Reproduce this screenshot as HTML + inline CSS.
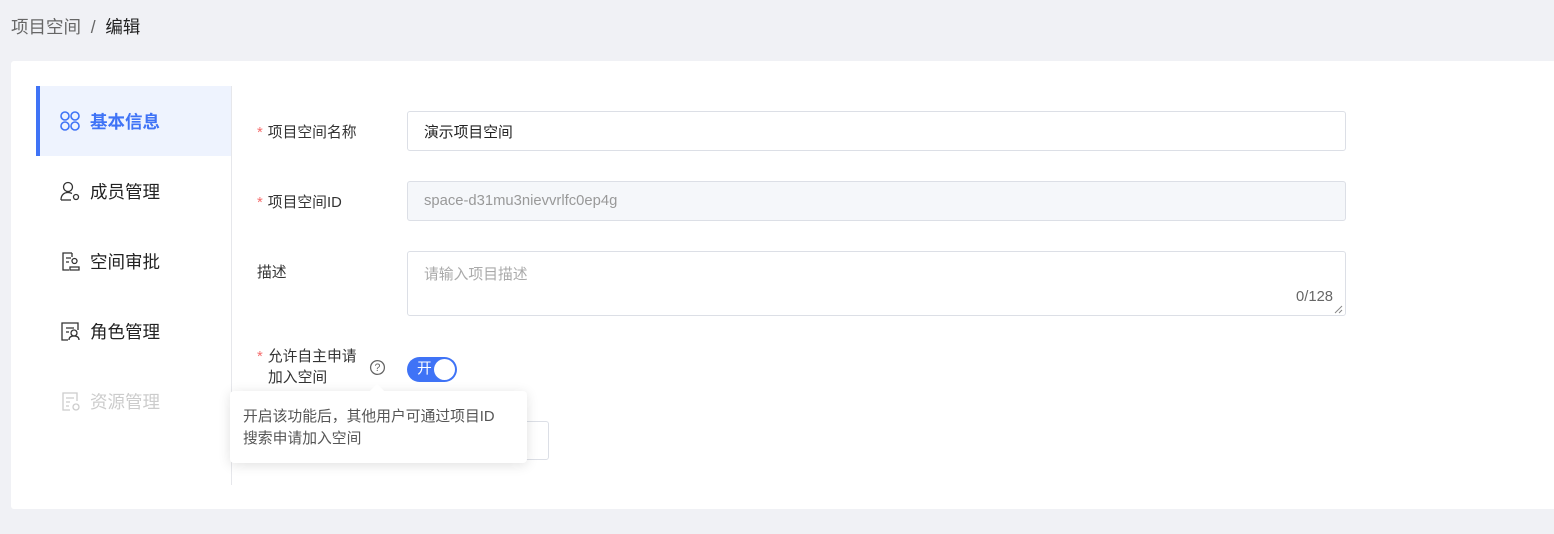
<!DOCTYPE html>
<html><head><meta charset="utf-8"><style>
*{margin:0;padding:0;box-sizing:border-box}
body{width:1554px;height:534px;background:#f0f1f5;font-family:"Liberation Sans","Noto Sans CJK SC",sans-serif;position:relative;overflow:hidden;color:#333}
.a{position:absolute}
.crumb{left:11px;top:14px;font-size:17.5px;color:#666}
.crumb b{font-weight:normal;color:#222}
.card{left:11px;top:61px;width:1560px;height:448px;background:#fff;border-radius:3px}
.nav{left:36px;width:195px;height:70px;font-size:17.5px;display:flex;align-items:center;padding-left:23px;color:#222}
.nav svg{margin-right:9px;flex-shrink:0;width:22px;height:22px}
.div{left:231px;top:86px;width:1px;height:399px;background:#e6e7eb}
.lab{font-size:14.8px;color:#333}
.lab i{color:#f56c6c;font-style:normal;margin-right:5px}
.inp{left:407px;width:939px;border:1px solid #dcdfe6;border-radius:3px;font-size:14.8px;padding-left:16px;display:flex;align-items:center}
</style></head><body>
<div class="a crumb">项目空间 &nbsp;/&nbsp; <b>编辑</b></div>
<div class="a card"></div>
<div class="a nav" style="top:86px;background:#eef3fe;border-left:4px solid #3f73f6;padding-left:19px;color:#3f73f6;font-weight:bold">
<svg viewBox="0 0 22 22" fill="none" stroke="#3f73f6" stroke-width="1.6"><circle cx="6" cy="6" r="4"/><circle cx="16" cy="6" r="4"/><circle cx="6" cy="16" r="4"/><circle cx="16" cy="16" r="4"/></svg>基本信息</div>
<div class="a nav" style="top:156px"><svg viewBox="0 0 22 22" fill="none" stroke="#333" stroke-width="1.3"><circle cx="9" cy="7" r="4.5"/><path d="M2 20c0-5 3-7.5 7-7.5 2 0 3 .5 4 1"/><path d="M2 20h10"/><circle cx="17" cy="17" r="2.5"/></svg>成员管理</div>
<div class="a nav" style="top:226px"><svg viewBox="0 0 22 22" fill="none" stroke="#333" stroke-width="1.3"><path d="M13 3H4v17h6"/><path d="M13 3v4M7 8h5M7 12h3"/><circle cx="15.5" cy="11" r="2.5"/><path d="M11 20v-3h9v3z"/></svg>空间审批</div>
<div class="a nav" style="top:296px"><svg viewBox="0 0 22 22" fill="none" stroke="#333" stroke-width="1.3"><path d="M9 20H3V3h16v7"/><path d="M7 8h8M7 12h3"/><circle cx="15" cy="13" r="3"/><path d="M10 20c0-3 2-4 5-4s5 1 5 4"/></svg>角色管理</div>
<div class="a nav" style="top:366px;color:#ccc"><svg viewBox="0 0 22 22" fill="none" stroke="#ccc" stroke-width="1.3"><path d="M11 20H4V3h14v8"/><path d="M7 8h8M7 12h4M7 16h3"/><circle cx="17" cy="17" r="3"/></svg>资源管理</div>
<div class="a div"></div>
<div class="a lab" style="left:257px;top:121px"><i>*</i>项目空间名称</div>
<div class="a inp" style="top:111px;height:40px;color:#222">演示项目空间</div>
<div class="a lab" style="left:257px;top:191px"><i>*</i>项目空间ID</div>
<div class="a inp" style="top:181px;height:40px;background:#f5f7fa;color:#999">space-d31mu3nievvrlfc0ep4g</div>
<div class="a lab" style="left:257px;top:261px">描述</div>
<div class="a inp" style="top:251px;height:65px;align-items:flex-start;padding-top:11px;color:#aaa">请输入项目描述</div>
<div class="a" style="left:1296px;top:289px;font-size:14.8px;color:#666">0/128</div>
<svg class="a" style="left:1333px;top:304px" width="10" height="10"><path d="M2 9L9 2M6 9L9 6" stroke="#888" stroke-width="1"/></svg>
<div class="a lab" style="left:257px;top:347px;line-height:21px"><i>*</i>允许自主申请<br><span style="margin-left:11px">加入空间</span></div>
<svg class="a" style="left:369px;top:359px" width="17" height="17" viewBox="0 0 16 16"><circle cx="8" cy="8" r="6.5" fill="none" stroke="#666" stroke-width="1.2"/><text x="8" y="11.5" font-size="10" text-anchor="middle" fill="#666" font-family="Liberation Sans">?</text></svg>
<div class="a" style="left:407px;top:357px;width:50px;height:25px;border-radius:13px;background:#3f73f6;color:#fff;font-size:14.8px;line-height:25px;padding-left:10px">开<div class="a" style="left:27px;top:2px;width:21px;height:21px;border-radius:50%;background:#fff"></div></div>
<div class="a" style="left:480px;top:421px;width:69px;height:39px;border:1px solid #dcdfe6;border-radius:3px"></div>
<div class="a" style="left:230px;top:391px;width:297px;height:72px;background:#fff;border-radius:4px;box-shadow:0 2px 12px rgba(0,0,0,.12);font-size:14.8px;line-height:22px;padding:15px 13px;color:#555;white-space:nowrap">开启该功能后，其他用户可通过项目ID<br>搜索申请加入空间</div>
<div class="a" style="left:372px;top:386px;width:10px;height:10px;background:#fff;transform:rotate(45deg)"></div>
</body></html>
